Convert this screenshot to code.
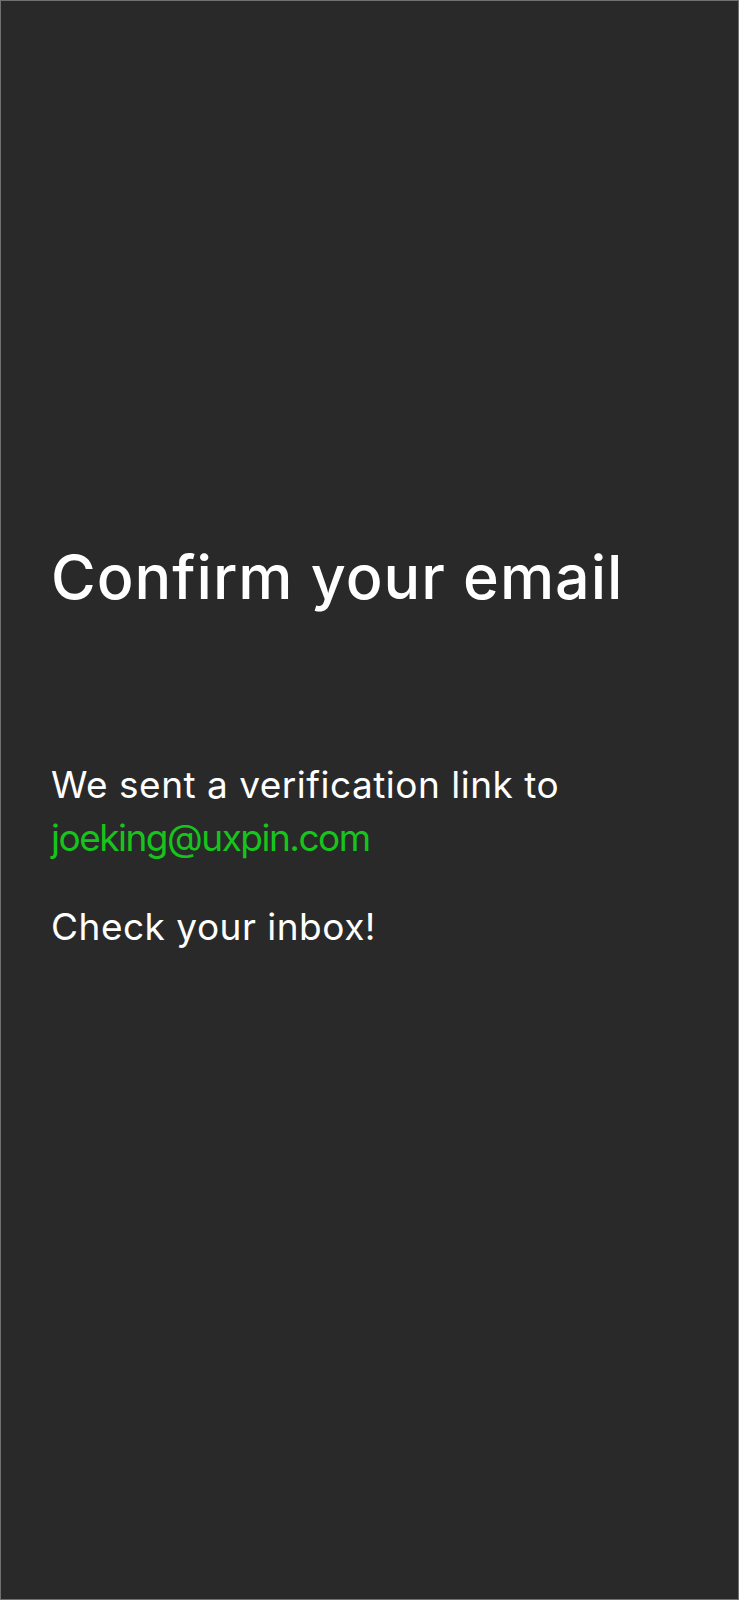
import React from 'react';

const App = () => {
  return (
    <div
      className="h-[1600px] w-full border border-[#707070] bg-[#292929] pl-[50px] pt-[540px] text-white"
      style={{ fontFamily: 'Inter, "Noto Sans", sans-serif' }}
    >
      <h1 className="text-[61px] leading-[72px] font-medium tracking-[1px]">Confirm your email</h1>

      <div className="mt-[145px] text-[37px] leading-[53px] tracking-[0.5px]">
        <p>
          We sent a verification link to
          <br />
          <span className="text-[#16c41c] tracking-[-1.5px]">joeking@uxpin.com</span>
        </p>
        <p className="mt-[36px]">Check your inbox!</p>
      </div>
    </div>
  );
};

export default App;
